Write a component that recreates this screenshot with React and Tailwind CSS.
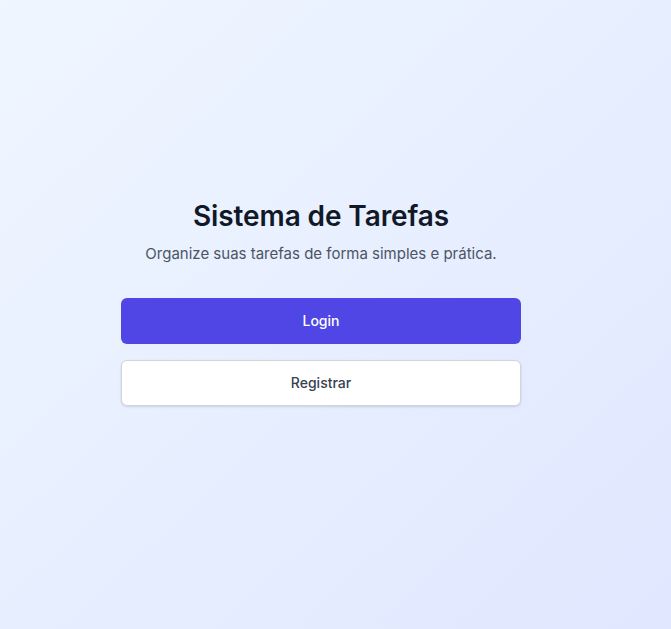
export default function App() {
  return (
    <div className="min-h-screen w-full bg-gradient-to-br from-[#eff6ff] to-[#e0e7ff]" style={{ fontFamily: "Inter, 'Noto Sans', sans-serif" }}>
      <div className="w-[642px] flex flex-col items-center pt-[197px]">
        <h1 className="text-[28px] leading-[38px] font-semibold text-[#111827] tracking-[-0.1px]">Sistema de Tarefas</h1>
        <p className="mt-[7px] text-[15px] leading-[24px] text-[#4b5563]">Organize suas tarefas de forma simples e prática.</p>
        <div className="mt-[32px] w-[400px] flex flex-col gap-4">
          <button className="h-[46px] w-full rounded-md bg-[#4f46e5] text-white text-sm font-medium">Login</button>
          <button className="h-[46px] w-full rounded-md bg-white border border-[#d1d5db] shadow-sm text-[#374151] text-sm font-medium">Registrar</button>
        </div>
      </div>
    </div>
  );
}
